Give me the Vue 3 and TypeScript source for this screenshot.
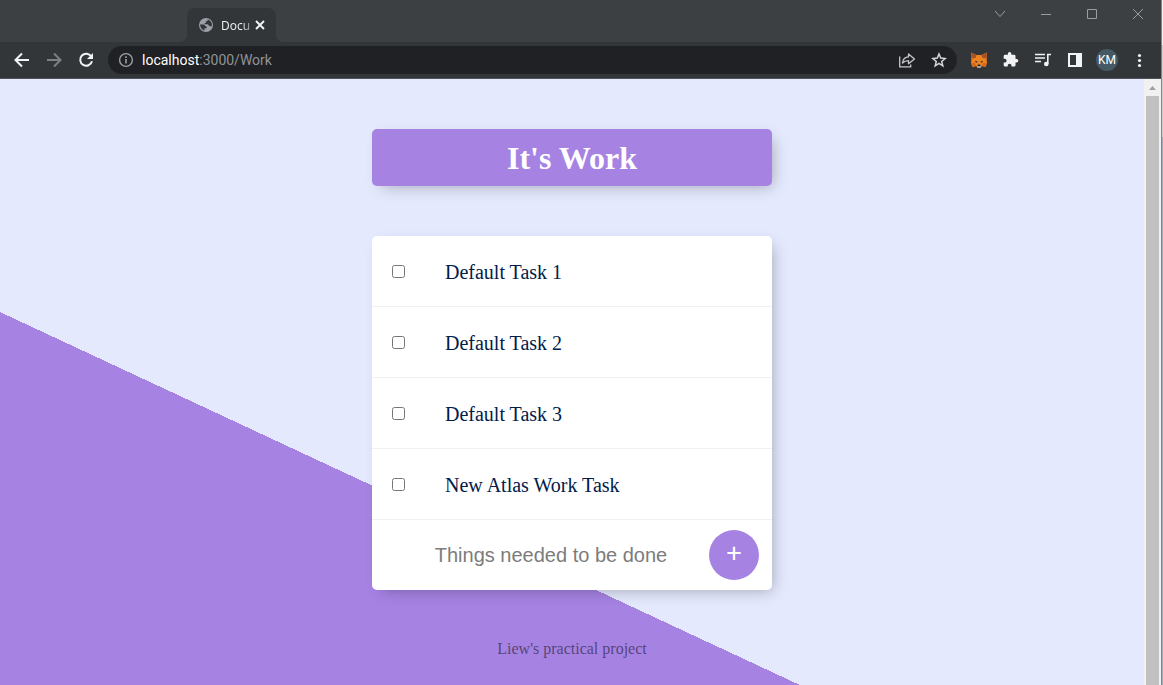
<script setup lang="ts">
import { ref } from 'vue'

interface Task {
  id: number
  name: string
  done: boolean
}

const tasks = ref<Task[]>([
  { id: 1, name: 'Default Task 1', done: false },
  { id: 2, name: 'Default Task 2', done: false },
  { id: 3, name: 'Default Task 3', done: false },
  { id: 4, name: 'New Atlas Work Task', done: false },
])
const draft = ref('')

function addTask() {
  const name = draft.value.trim()
  if (!name) return
  tasks.value.push({ id: tasks.value.length + 1, name, done: false })
  draft.value = ''
}
</script>

<template>
  <div class="window">
    <div class="frame">
      <header class="titlebar">
        <div class="tab">
          <svg class="favicon" viewBox="0 0 16 16" aria-hidden="true">
            <circle cx="8" cy="8" r="7" fill="#9aa0a6" />
            <path d="M2 7.600h3.400c1.600 0 1.500 2 3.200 2v1.700H6.500v2.200C3.800 13 2.100 10.500 2 7.600zM9.800 2.600c0 1.300-.6 1.800-1.900 1.800v1.500H6.700v1.300h2.600c1.400 0 1.400 2 2.700 2h1.700c.8-2.700-.8-5.700-3.900-6.600z" fill="#323639" />
          </svg>
          <span class="tab-title">Docu</span>
          <button class="plain tab-close" aria-label="Close tab">
            <svg viewBox="0 0 10 10" width="10" height="10"><path d="M1 1l8 8M9 1L1 9" stroke="#f1f3f4" stroke-width="1.900" /></svg>
          </button>
        </div>
        <div class="controls">
          <button class="plain" aria-label="Search tabs">
            <svg viewBox="0 0 12 12" width="12" height="12"><path d="M1 3l5 5.500L11 3" /></svg>
          </button>
          <button class="plain" aria-label="Minimize">
            <svg viewBox="0 0 12 12" width="12" height="12"><path d="M1 6.500h10" /></svg>
          </button>
          <button class="plain" aria-label="Maximize">
            <svg viewBox="0 0 12 12" width="12" height="12"><path d="M1.500 1.500h9v9h-9z" /></svg>
          </button>
          <button class="plain" aria-label="Close window">
            <svg viewBox="0 0 12 12" width="12" height="12"><path d="M1 1l10 10M11 1L1 11" /></svg>
          </button>
        </div>
      </header>

      <nav class="toolbar">
        <button class="plain tool" aria-label="Back">
          <svg viewBox="0 0 16 16"><path d="M15 8H2M8 1.500L1.500 8 8 14.500" fill="none" stroke="#f1f3f4" stroke-width="2" /></svg>
        </button>
        <button class="plain tool" aria-label="Forward">
          <svg viewBox="0 0 16 16"><path d="M1 8h13M8 1.500L14.500 8 8 14.500" fill="none" stroke="#7d8084" stroke-width="2" /></svg>
        </button>
        <button class="plain tool" aria-label="Reload">
          <svg viewBox="0 0 16 16"><path d="M13.300 4.500A6 6 0 1 0 14 9.300" fill="none" stroke="#f1f3f4" stroke-width="2" /><path d="M15 1v6H9z" fill="#f1f3f4" /></svg>
        </button>
        <div class="address">
          <svg viewBox="0 0 16 16" width="16" height="16" aria-hidden="true">
            <circle cx="8" cy="8" r="6.400" fill="none" stroke="#9aa0a6" stroke-width="1.400" />
            <path d="M8 7v4.500M8 4.300v1.600" stroke="#9aa0a6" stroke-width="1.600" />
          </svg>
          <span class="url"><span class="host">localhost</span>:3000/Work</span>
          <button class="plain" aria-label="Share">
            <svg viewBox="0 0 16 16" width="16" height="16" fill="none" stroke="#c4c7ca" stroke-width="1.300"><path d="M.7 4.500v10.300h11V12.500" /><path d="M3.500 11c.4-3.700 2.700-5.900 6-6.100V2l6 4.900-6 4.800V8.600c-2.400 0-4.400.6-6 2.400z" stroke-linejoin="round" /></svg>
          </button>
          <button class="plain" aria-label="Bookmark this tab">
            <svg viewBox="0 0 16 16" width="16" height="16"><path d="M8 2l1.700 4.100 4.400.4-3.400 2.900 1.100 4.400L8 11.400l-3.800 2.400 1.100-4.400-3.400-2.900 4.400-.4z" fill="none" stroke="#d5d7d9" stroke-width="1.500" /></svg>
          </button>
        </div>
        <button class="plain tool" aria-label="MetaMask">
          <svg viewBox="0 0 16 16">
            <path d="M0 .5l5.500 2.500h5l5.500-2.500V6l-.4 1.500L16 11l-1.500 4-3.700-1-1.300 1.800h-3L5.200 14l-3.700 1L0 11l.4-3.500L0 6z" fill="#ee8220" />
            <path d="M0 .5l5.500 2.500L4.500 6 .3 6.500zM16 .5L10.500 3l1 3 4.200.5z" fill="#a5532a" />
            <path d="M0 11h4l1.200 3-3.700 1zM16 11h-4l-1.200 3 3.700 1z" fill="#d66a1b" />
            <path d="M4.200 8.800l2.300.7-.4 1.300-1.700-.6zM11.800 8.800l-2.300.7.4 1.300 1.700-.6z" fill="#3b3638" />
            <path d="M5.500 13.500h5l-1 2.300h-3z" fill="#c9b5a8" /><path d="M6.700 12.500h2.600l.3 1.800H6.400z" fill="#302b30" />
          </svg>
        </button>
        <button class="plain tool" aria-label="Extensions">
          <svg viewBox="1 1 23 23"><path d="M20.500 11H19V7a2 2 0 0 0-2-2h-4V3.500a2.500 2.500 0 0 0-5 0V5H4a2 2 0 0 0-2 2v3.800h1.500a2.700 2.700 0 0 1 0 5.400H2V20a2 2 0 0 0 2 2h3.800v-1.500a2.700 2.700 0 0 1 5.400 0V22H17a2 2 0 0 0 2-2v-4h1.500a2.500 2.500 0 0 0 0-5z" fill="#f1f3f4" /></svg>
        </button>
        <button class="plain tool" aria-label="Media controls">
          <svg viewBox="0 0 16 16"><path d="M0 2.500h10M0 6h10M0 9.500h6M12.800 12V2.500H16" fill="none" stroke="#f1f3f4" stroke-width="1.600" /><circle cx="11.300" cy="12" r="2.300" fill="#f1f3f4" /></svg>
        </button>
        <button class="plain tool" aria-label="Side panel">
          <svg viewBox="0 0 16 16"><path d="M1 1h14v14H1zM3 3v10h6V3z" fill="#f1f3f4" fill-rule="evenodd" /></svg>
        </button>
        <button class="plain avatar" aria-label="Profile KM">KM</button>
        <button class="plain tool" aria-label="Menu">
          <svg viewBox="0 0 16 16" fill="#f1f3f4"><circle cx="8.500" cy="3.500" r="1.600" /><circle cx="8.500" cy="8.500" r="1.600" /><circle cx="8.500" cy="13.500" r="1.600" /></svg>
        </button>
      </nav>

      <div class="viewport">
        <main class="page">
          <div class="box heading"><h1>It's Work</h1></div>
          <div class="box">
            <div v-for="task in tasks" :key="task.id" class="item">
              <input :id="`task-${task.id}`" v-model="task.done" type="checkbox" />
              <label :for="`task-${task.id}`">{{ task.name }}</label>
            </div>
            <form class="new-item" @submit.prevent="addTask">
              <input v-model="draft" type="text" placeholder="Things needed to be done" aria-label="New task" autocomplete="off" />
              <button type="submit">+</button>
            </form>
          </div>
          <footer>Liew's practical project</footer>
        </main>
        <div class="scrollbar" aria-hidden="true">
          <svg viewBox="0 0 17 17" width="17" height="17"><path d="M5 11h7L8.500 7z" fill="#a0a0a0" /></svg>
          <div class="thumb"></div>
        </div>
      </div>
    </div>
  </div>
</template>

<style>
body {
  margin: 0;
}
</style>

<style scoped>
.window {
  box-sizing: border-box;
  height: 100vh;
  padding-right: 1px;
  background: linear-gradient(#f3f3f3 45px, #cfcfd0 45px, #cfcfd0 137px, #a3a8ba 137px);
  overflow: hidden;
}
.frame {
  display: flex;
  flex-direction: column;
  box-sizing: border-box;
  height: 100%;
  border-right: 1px solid #85868c;
}
.plain {
  display: flex;
  align-items: center;
  justify-content: center;
  padding: 0;
  border: 0;
  background: none;
  flex: none;
}
.titlebar {
  display: flex;
  justify-content: space-between;
  height: 42px;
  background: #3c4043;
  font-family: "Open Sans", "Noto Sans", sans-serif;
}
.tab {
  position: relative;
  display: flex;
  align-items: center;
  box-sizing: border-box;
  width: 89px;
  margin: 8px 0 0 187px;
  padding: 0 11px;
  border-radius: 8px 8px 0 0;
  background: #323639;
  color: #f1f3f4;
  font-size: 12px;
}
.tab::before,
.tab::after {
  content: "";
  position: absolute;
  bottom: 0;
  width: 8px;
  height: 8px;
}
.tab::before {
  right: 100%;
  background: radial-gradient(circle at 0 0, transparent 8px, #323639 8px);
}
.tab::after {
  left: 100%;
  background: radial-gradient(circle at 100% 0, transparent 8px, #323639 8px);
}
.favicon {
  width: 16px;
  height: 16px;
  flex: none;
}
.tab-title {
  flex: 1;
  margin-left: 7px;
  white-space: nowrap;
  mask-image: linear-gradient(to right, #000 60%, transparent 110%);
}
.controls {
  display: flex;
  align-items: flex-start;
}
.controls .plain {
  width: 46px;
  height: 28px;
}
.controls svg {
  fill: none;
  stroke: #9b9da0;
  stroke-width: 1;
}
.toolbar {
  display: flex;
  align-items: center;
  gap: 16px;
  box-sizing: border-box;
  height: 37px;
  padding: 0 14px;
  border-bottom: 1px solid #505357;
  background: #323639;
}
.tool,
.tool svg {
  width: 16px;
  height: 16px;
}
.address {
  display: flex;
  align-items: center;
  flex: 1;
  gap: 16px;
  box-sizing: border-box;
  height: 28px;
  margin: 0 -2px;
  padding: 0 10px;
  border-radius: 14px;
  background: #202124;
}
.url {
  flex: 1;
  margin-left: -8px;
  color: #8f9499;
  font: 14px/20px Roboto, "Noto Sans", sans-serif;
}
.host {
  color: #fff;
}
.avatar {
  width: 22px;
  height: 22px;
  margin: 0 -3px;
  border-radius: 50%;
  background: #455a64;
  color: #fff;
  font: 12px/22px Roboto, sans-serif;
}
.viewport {
  display: flex;
  flex: 1;
  min-height: 0;
}
.page {
  flex: 1;
  padding-top: 50px;
  overflow: hidden;
  background: linear-gradient(25deg, #a683e3 338px, #e4e9fd 338px);
  font-family: "Liberation Serif", "Times New Roman", serif;
}
.box {
  max-width: 400px;
  margin: 0 auto 50px;
  border-radius: 5px;
  background: #fff;
  box-shadow: 5px 5px 15px -5px rgba(0, 0, 0, 0.3);
}
.heading {
  padding: 11px 10px 9px;
  box-sizing: border-box;
  background: #a683e3;
  text-align: center;
}
h1 {
  margin: 0;
  color: #fff;
  font-size: 32px;
  line-height: 37px;
}
.item {
  display: flex;
  align-items: center;
  height: 70px;
  border-bottom: 1px solid #f1f1f1;
}
.item input {
  width: 13px;
  height: 13px;
  margin: 0 40px 0 20px;
}
.item label {
  padding-top: 1px;
  color: #00204a;
  font-size: 20px;
  line-height: 24px;
}
.new-item {
  display: flex;
  align-items: center;
  height: 70px;
}
.new-item input {
  flex: 1;
  min-width: 0;
  height: 60px;
  box-sizing: border-box;
  margin-left: 31px;
  padding: 0;
  border: 0;
  outline: none;
  background: transparent;
  font: 20px "Liberation Sans", Arial, sans-serif;
  text-align: center;
}
.new-item input::placeholder {
  color: #7c7c7c;
}
.new-item button {
  width: 50px;
  height: 50px;
  margin: 0 13px 0 10px;
  padding: 0 0 6px;
  border: 0;
  border-radius: 50%;
  background: #a683e3;
  color: #fff;
  font: 28px "Noto Sans", sans-serif;
  line-height: 44px;
}
footer {
  color: rgba(0, 0, 0, 0.5);
  font-size: 16px;
  line-height: 18px;
  text-align: center;
}
.scrollbar {
  display: flex;
  flex-direction: column;
  width: 17px;
  background: #f1f1f1;
}
.thumb {
  flex: 1;
  margin: 0 2px;
  background: #c1c1c1;
}
</style>
